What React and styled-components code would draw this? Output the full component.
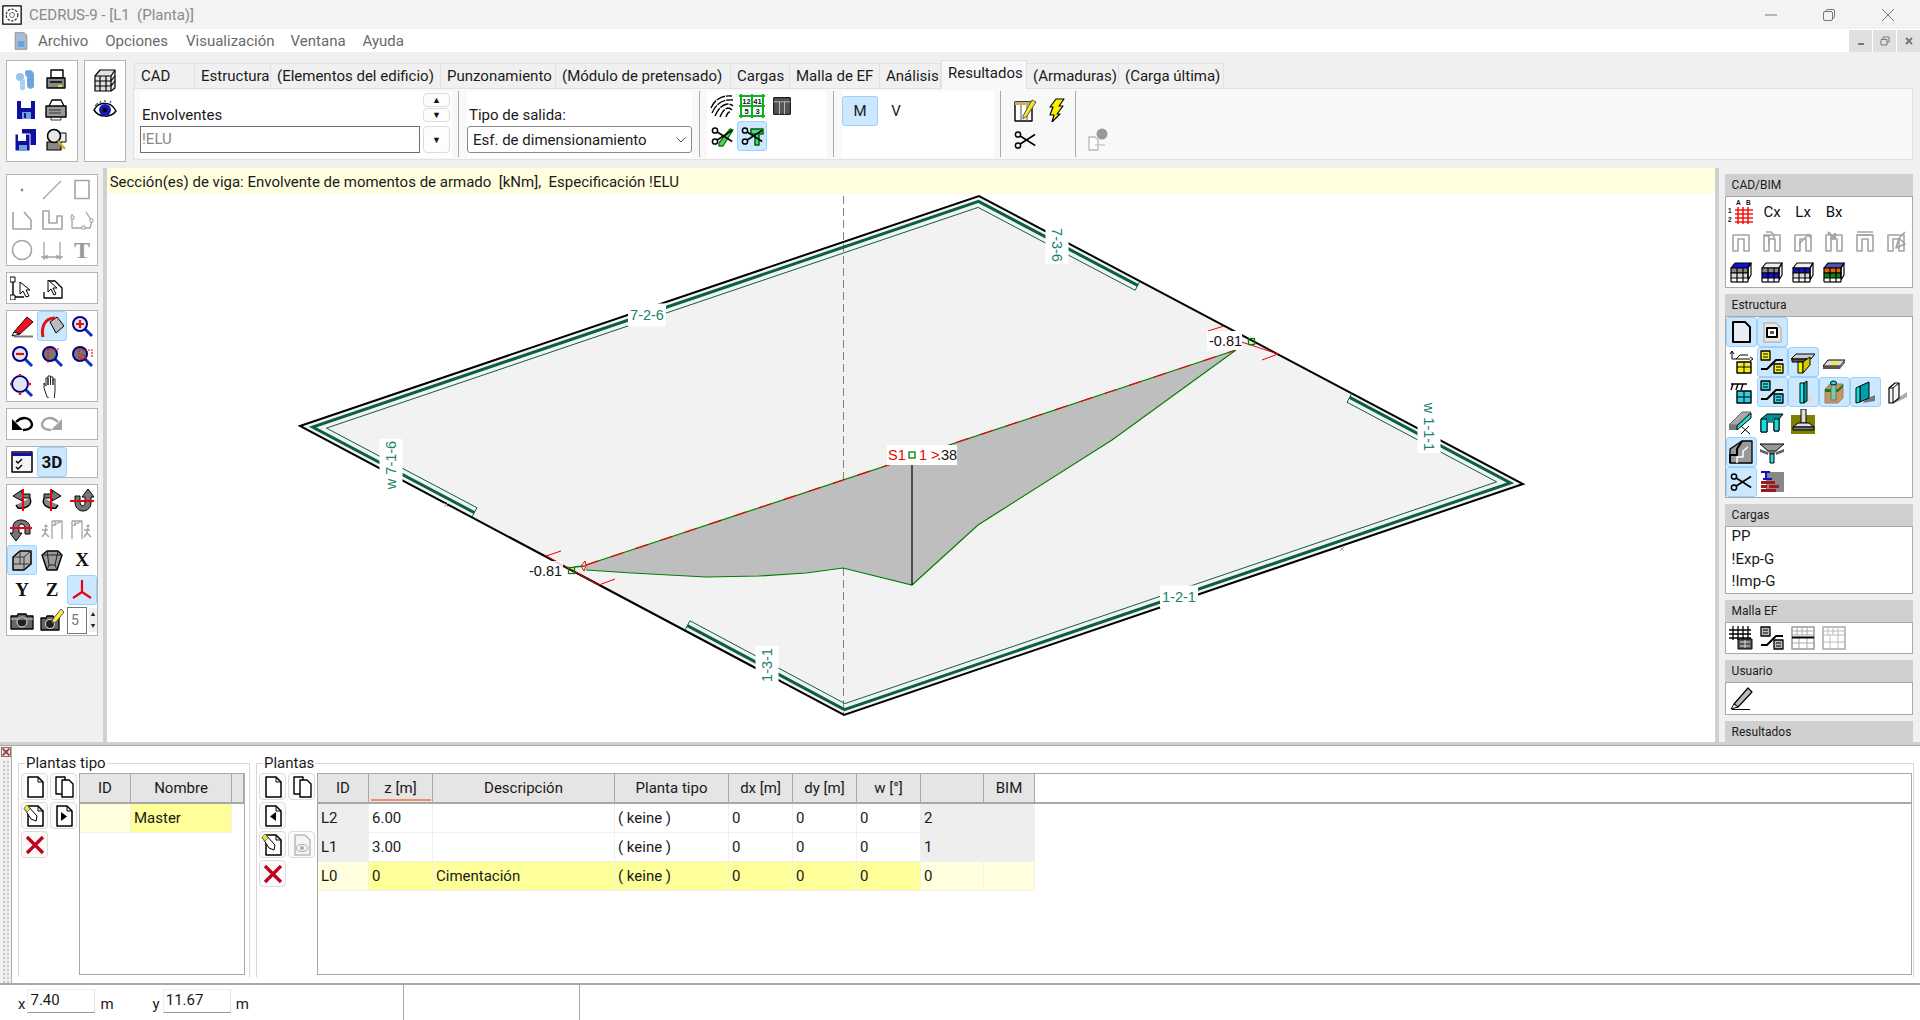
import styled, { createGlobalStyle } from 'styled-components'

const GlobalStyle = createGlobalStyle`
html, body { margin: 0; padding: 0; height: 100%; overflow: hidden; background: #f0f0f0; }
#root { height: 100%; }
* { box-sizing: border-box; }
`
const Page = styled.div`
width: 1920px;
height: 1020px;
display: flex;
flex-direction: column;
overflow: hidden;
font-family: Roboto, 'Liberation Sans', sans-serif;
font-size: 15px;
color: #1a1a1a;
background: #f0f0f0;
`
const TitleBar = styled.div`
height: 29px;
display: flex;
align-items: center;
background: #f3f3f3;
color: #8a8a8a;
padding-left: 2px;
gap: 7px;
`
const WinButtons = styled.div`
margin-left: auto;
display: flex;
padding-right: 3px;
`
const WinButton = styled.div`
width: 58.5px;
height: 29px;
display: flex;
align-items: center;
justify-content: center;
`
const MenuBar = styled.div`
height: 23px;
display: flex;
align-items: center;
background: #fff;
color: #6a6a6a;
padding: 0 0 0 11px;
`
const MenuItem = styled.span`
margin: 1px 0 0 ${(p) => p.$ml}px;
`
const MdiButtons = styled.div`
margin-left: auto;
display: flex;
gap: 1px;
`
const MdiButton = styled.div`
width: 23px;
height: 22px;
display: flex;
align-items: center;
justify-content: center;
background: #e0e0e0;
`
const ToolRow = styled.div`
height: 116px;
display: flex;
padding: 8px 7px 0 6px;
`
const SideBox = styled.div`
height: 102px;
width: ${(p) => p.$w}px;
margin-right: ${(p) => p.$mr}px;
border: 1px solid #b4b4b4;
background: #fff;
padding: 4px 0 0 ${(p) => p.$pl}px;
display: grid;
grid-template-columns: repeat(${(p) => p.$cols}, 30px);
grid-auto-rows: 30px;
`
const TabArea = styled.div`
flex: 1;
display: flex;
flex-direction: column;
padding-top: 3px;
`
const Tabs = styled.div`
display: flex;
height: 25px;
align-items: flex-end;
padding-left: 1px;
`
const Tab = styled.div`
width: ${(p) => p.$w}px;
height: ${(p) => (p.$active ? 29 : 25)}px;
padding: 3px 0 0 6px;
background: ${(p) => (p.$active ? '#f8f8f8' : '#f0f0f0')};
border: 1px solid #e2e2e2;
border-bottom: none;
border-left: ${(p) => (p.$first || p.$active ? '1px solid #e2e2e2' : 'none')};
white-space: nowrap;
margin-bottom: ${(p) => (p.$active ? -1 : 0)}px;
position: relative;
z-index: ${(p) => (p.$active ? 1 : 0)};
`
const RibbonPanel = styled.div`
height: 72px;
display: flex;
background: #f8f8f8;
border: 1px solid #e2e2e2;
padding: 2px 0 0 6px;
`
const Group = styled.div`
width: ${(p) => p.$w}px;
height: 67px;
background: ${(p) => (p.$plain ? 'transparent' : '#fff')};
padding-left: ${(p) => p.$pl || 0}px;
padding-top: ${(p) => p.$pt || 0}px;
`
const Sep = styled.div`
width: 1px;
height: 66px;
background: #a8a8a8;
margin: 0 ${(p) => p.$r}px 0 ${(p) => p.$l}px;
`
const EnvGrid = styled.div`
display: grid;
grid-template-columns: 280px 27px;
column-gap: 3px;
row-gap: 4px;
padding-top: 2px;
`
const EnvLabel = styled.div`
align-self: end;
padding: 0 0 0 2px;
margin-bottom: -2px;
`
const SpinStack = styled.div`
display: flex;
flex-direction: column;
gap: 1px;
`
const ArrowButton = styled.div`
height: ${(p) => p.$h}px;
border: 1px solid #dcdcdc;
border-radius: 4px;
background: #fdfdfd;
display: flex;
align-items: center;
justify-content: center;
font-size: 9px;
color: #111;
`
const TextField = styled.div`
height: 27px;
border: 1px solid #6e6e6e;
padding: 3px 1px;
color: #888;
line-height: 19px;
`
const SalidaLabel = styled.div`
height: 35px;
padding: 15px 0 0 2px;
line-height: 18px;
`
const SelectBox = styled.div`
height: 27px;
display: flex;
align-items: center;
justify-content: space-between;
border: 1px solid #8a8a8a;
border-radius: 3px;
padding: 0 5px;
`
const IconGrid = styled.div`
display: grid;
grid-template-columns: repeat(${(p) => p.$cols}, ${(p) => p.$cw || 30}px);
grid-auto-rows: ${(p) => p.$rh || 30}px;
`
const ToolButton = styled.div`
display: flex;
align-items: center;
justify-content: center;
border-radius: 3px;
border: 1px solid ${(p) => (p.$active ? '#99d1ff' : 'transparent')};
background: ${(p) => (p.$active ? '#cce8ff' : 'transparent')};
`
const TextTool = styled(ToolButton)`
font-family: ${(p) => (p.$serif ? "'Liberation Serif', serif" : "Roboto, sans-serif")};
font-weight: ${(p) => (p.$bold ? 700 : 400)};
font-size: ${(p) => p.$fs || 15}px;
color: ${(p) => p.$color || '#111'};
`
const LetterRow = styled.div`
display: flex;
padding-top: 5px;
`
const LetterButton = styled.div`
width: 36px;
height: 30px;
display: flex;
align-items: center;
justify-content: center;
border-radius: 3px;
border: 1px solid ${(p) => (p.$active ? '#99d1ff' : 'transparent')};
background: ${(p) => (p.$active ? '#cce8ff' : 'transparent')};
`
const Middle = styled.div`
height: 574px;
display: flex;
`
const LeftTools = styled.div`
width: 104px;
padding: 6px 0 0 6px;
display: flex;
flex-direction: column;
gap: 6px;
`
const ToolBox = styled.div`
width: 92px;
border: 1px solid #b4b4b4;
background: #fff;
display: grid;
grid-template-columns: repeat(3, 30px);
grid-auto-rows: 30px;
`
const SpinCell = styled.div`
display: flex;
align-items: center;
padding-left: 0;
`
const SpinValue = styled.div`
width: 20px;
height: 27px;
border: 1px solid #777;
color: #777;
font-size: 14px;
line-height: 25px;
padding-left: 3px;
`
const MiniSpin = styled.div`
margin-left: 2px;
width: 8px;
display: flex;
flex-direction: column;
align-items: center;
font-size: 7px;
line-height: 12px;
background: #f0f0f0;
`
const Splitter = styled.div`
width: 4px;
background: #d0d0d0;
`
const HSplitter = styled.div`
height: 3px;
flex: none;
background: #d0d0d0;
`
const CanvasColumn = styled.div`
width: 1608px;
display: flex;
flex-direction: column;
`
const InfoLine = styled.div`
height: 26px;
background: #ffffdf;
padding-left: 3px;
line-height: 28px;
`
const DrawArea = styled.div`
flex: 1;
background: #fff;
`
const RightPanel = styled.div`
width: 204px;
padding: 6px 0 0 6px;
overflow: hidden;
`
const PanelHead = styled.div`
height: 22px;
width: 188px;
background: #d0d0d0;
padding-left: 7px;
font-size: 12px;
line-height: 22px;
`
const PanelBody = styled.div`
width: 188px;
border: 1px solid #a8a8a8;
background: #fff;
margin-bottom: 6px;
height: ${(p) => p.$h}px;
`
const LoadRow = styled.div`
height: 22.5px;
line-height: 18px;
padding-left: 6px;
`
const Bottom = styled.div`
height: 240px;
display: flex;
border-top: 1px solid #a8a8a8;
border-bottom: 2px solid #a8a8a8;
background: #fff;
`
const Grip = styled.div`
width: 12px;
background: #f0f0f0;
border-right: 1px solid #b0b0b0;
padding: 1px 0 0 1px;
display: flex;
flex-direction: column;
align-items: center;
`
const GripDots = styled.div`
width: 8px;
flex: 1;
margin-top: 3px;
background-image: radial-gradient(#c8c8c8 1px, transparent 1.2px);
background-size: 4px 4px;
`
const BottomBody = styled.div`
flex: 1;
display: flex;
padding: 17px 6px 6px 6px;
gap: 6px;
`
const Fieldset = styled.div`
position: relative;
width: ${(p) => p.$w || 'auto'};
flex: ${(p) => (p.$grow ? 1 : 'none')};
border: 1px solid #d8d8d8;
border-bottom: none;
display: flex;
padding: 9px ${(p) => p.$pr}px 0 2px;
`
const Legend = styled.div`
position: absolute;
top: -11px;
left: 6px;
background: #fff;
padding: 0 1px;
line-height: 20px;
`
const ActionGrid = styled.div`
display: grid;
grid-template-columns: 27px 27px;
grid-auto-rows: 29px;
column-gap: 2px;
align-content: start;
margin-right: 2px;
`
const ActionButton = styled.div`
width: 27px;
height: 27px;
border: 1px solid #dcdcdc;
border-radius: 4px;
background: #fbfbfb;
display: flex;
align-items: center;
justify-content: center;
`
const Table = styled.div`
flex: 1;
height: 202px;
border: 1px solid #a8a8a8;
background: #fff;
`
const HeadRow = styled.div`
display: flex;
height: 30px;
border-bottom: 2px solid #a8a8a8;
`
const HeadCell = styled.div`
position: relative;
width: ${(p) => p.$w}px;
background: #e5e5e5;
border-right: 1px solid #a8a8a8;
display: flex;
align-items: center;
justify-content: center;
&::after {
  content: '';
  display: ${(p) => (p.$sorted ? 'block' : 'none')};
  position: absolute;
  left: 2px;
  right: 1px;
  bottom: 1px;
  height: 2px;
  background: #f09060;
}
`
const BodyRow = styled.div`
display: flex;
height: 29px;
`
const Cell = styled.div`
width: ${(p) => p.$w}px;
background: ${(p) => p.$bg || '#fff'};
border-right: 1px solid #f0f0f0;
border-bottom: 1px solid #f0f0f0;
padding-left: 3px;
line-height: 29px;
white-space: nowrap;
`
const StatusBar = styled.div`
flex: 1;
display: flex;
align-items: center;
background: #fff;
`
const StatusSection = styled.div`
height: 100%;
width: ${(p) => p.$w}px;
display: flex;
align-items: center;
border-right: 1px solid #a8a8a8;
padding-left: ${(p) => p.$pl || 0}px;
`
const StatusLabel = styled.span`
margin: 2px ${(p) => p.$r}px 0 ${(p) => p.$l}px;
`
const StatusField = styled.div`
width: 68px;
height: 24px;
border-bottom: 1px solid #999;
border-right: 1px solid #e0e0e0;
border-top: 1px solid #eee;
border-left: 1px solid #eee;
padding-left: 2px;
line-height: 21px;
margin-top: -3px;
`

const Glyph = ({ children, s = 24 }) => (
  <svg width={s} height={s} viewBox="0 0 24 24" fill="none" strokeLinejoin="round">
    {children}
  </svg>
)
const GREY = '#a4a4a4'
const Lens = ({ children, r = 7, fill = '#dfe6f5' }) => (
  <>
    <path d="M15 15l7 7" stroke="#1030c0" strokeWidth="3" />
    <circle cx="10" cy="10" r={r} fill={fill} stroke="#000080" strokeWidth="2" />
    {children}
  </>
)
const Scissors = ({ blade = '#000' }) => (
  <g stroke={blade} strokeWidth="1.5">
    <circle cx="5" cy="6.5" r="2.6" />
    <circle cx="5" cy="17.5" r="2.6" />
    <path d="M7.2 8l15 9.5M7.2 16L22 6.5" />
  </g>
)
const Stack = ({ a, b, c }) => (
  <g stroke="#000" strokeWidth="1.2">
    <path d="M2 8l4-5h16l-3 5z" fill={a} />
    <path d="M2 8h17v5H2z" fill={b} />
    <path d="M2 13h17v5H2z" fill={c} />
    <path d="M2 18v4M8 8v14M14 8v14M19 8v14M19 8l3-5v12l-3 5" />
    <path d="M2 22h17" />
  </g>
)
const Frame = ({ children }) => (
  <g stroke={GREY} strokeWidth="1.6">
    <path d="M4 21V5h16v16h-5V9H9v12z" />
    {children}
  </g>
)
const Sheet = ({ children }) => (
  <>
    <path d="M5 2h10l5 5v15H5z" fill="#fff" stroke="#000" strokeWidth="1.5" />
    <path d="M15 2v5h5" stroke="#000" />
    {children}
  </>
)
const RedX = () => (
  <Glyph>
    <path d="M4 4l16 16M20 4L4 20" stroke="#c00018" strokeWidth="3.2" />
  </Glyph>
)
const Sheets = () => (
  <Glyph>
    <path d="M4 2h9v17H4z" fill="#fff" stroke="#000" strokeWidth="1.4" />
    <path d="M10 5h7l4 4v13H10z" fill="#fff" stroke="#000" strokeWidth="1.4" />
  </Glyph>
)
const EditSheet = () => (
  <Glyph>
    <Sheet />
    <path d="M1 4l3-3 10 11-1 5-5-2z" fill="#fff" stroke="#000" />
    <path d="M1 4l3-3 3 4-3 3z" fill="#f4e820" stroke="#888" />
  </Glyph>
)

const ic = {
  point: <Glyph><circle cx="12" cy="12" r="1.4" fill="#888" /></Glyph>,
  line: <Glyph><path d="M3 21L21 3" stroke={GREY} strokeWidth="1.2" /></Glyph>,
  rect: <Glyph><path d="M5 2.5h14v18H5z" stroke={GREY} strokeWidth="1.6" /></Glyph>,
  poly: <Glyph><path d="M3 4v17h18V12l-7-8" stroke={GREY} strokeWidth="1.6" /></Glyph>,
  ushape: <Glyph><path d="M3 3v18h19V8h-5v7H9V3z" stroke={GREY} strokeWidth="1.6" /></Glyph>,
  nodes: (
    <Glyph>
      <path d="M2 6v14h18l2-7-6-9" stroke={GREY} strokeWidth="1.3" />
      <path d="M1 8h3v3H1zM12 18h3v3h-3zM20 11h3v3h-3z" fill="#fff" stroke={GREY} />
    </Glyph>
  ),
  circle: <Glyph><circle cx="12" cy="12" r="9.5" stroke={GREY} strokeWidth="1.6" /></Glyph>,
  dim: <Glyph><path d="M4 4v18M20 4v18M1 19h22M4 19l3-1.5v3zM20 19l-3-1.5v3z" stroke={GREY} strokeWidth="1.3" /></Glyph>,
  nodeArrow: (
    <Glyph>
      <path d="M3 6v15h11" stroke="#000" strokeWidth="1.4" />
      <path d="M0 1h5v5H0zM0 19h5v5H0z" fill="#fff" stroke="#000" />
      <path d="M10 6l0 12 3-3 3 6 3-1-3-6h4z" fill="#fff" stroke="#000" />
    </Glyph>
  ),
  boxArrow: (
    <Glyph>
      <path d="M8 5h7l7 7v10H4v-6" stroke="#000" strokeWidth="1.3" />
      <path d="M8 4v12l3-3 3 6 2-1-3-6h4z" fill="#fff" stroke="#000" />
    </Glyph>
  ),
  pencil: (
    <Glyph>
      <path d="M4 18L17 3l6 5-13 12z" fill="#f01020" stroke="#300" />
      <path d="M4 18l6 2-8 2z" fill="#fff" stroke="#000" />
      <path d="M4 22.5h19" stroke="#777" strokeWidth="2" />
    </Glyph>
  ),
  bucket: (
    <Glyph>
      <path d="M10 8l7-5 7 9-8 7z" fill="#bbb" stroke="#000" />
      <path d="M3 23C1 14 4 4 15 4" stroke="#e01010" strokeWidth="3" />
    </Glyph>
  ),
  zoomIn: <Glyph><Lens><path d="M10 6v8M6 10h8" stroke="#e01010" strokeWidth="2.2" /></Lens></Glyph>,
  zoomOut: <Glyph><Lens><path d="M6 10h8" stroke="#e01010" strokeWidth="2.2" /></Lens></Glyph>,
  zoomWin: <Glyph><Lens fill="#777"><path d="M5 5h14M8 5v14" stroke="#f01010" strokeDasharray="2 1" strokeWidth="1.2" /></Lens></Glyph>,
  zoomPrev: <Glyph><Lens fill="#777"><path d="M9 6h13v7M9 6v8M12 10l-2 6 6-2z" stroke="#f01010" strokeDasharray="2 1" strokeWidth="1.2" /></Lens></Glyph>,
  zoomFit: <Glyph><Lens r={8}><path d="M10 0v2M0 10h2M18 10h3M10 18v3" stroke="#f01010" strokeWidth="2.4" /></Lens></Glyph>,
  hand: (
    <Glyph>
      <path d="M7 23l-3-9V9l2 3V4h2v7-9h2.500v9-8H13v8-6h2v12l-1 10z" stroke="#222" fill="#fff" />
    </Glyph>
  ),
  undo: (
    <Glyph>
      <path d="M6 10c6-6 14-5 16 2 0 4-4 6-9 6" stroke="#000" strokeWidth="2.4" />
      <path d="M2 7v11h11z" fill="#000" />
    </Glyph>
  ),
  redo: (
    <Glyph>
      <path d="M18 10C12 4 4 5 2 12c0 4 4 6 9 6" stroke={GREY} strokeWidth="2.4" />
      <path d="M22 7v11H11z" fill={GREY} />
    </Glyph>
  ),
  checks: (
    <Glyph>
      <path d="M2 2h20v20H2z" fill="#f4f4f4" stroke="#000" strokeWidth="1.5" />
      <path d="M2 3h20v3H2z" fill="#1010b0" />
      <path d="M6 11l2 2 4-4M6 17l2 2 4-4" stroke="#000" strokeWidth="1.4" />
    </Glyph>
  ),
  rotL: (
    <Glyph>
      <path d="M12 2L3 8l9 5V10h8V6h-8z" fill="#777" stroke="#000" />
      <path d="M20 10c3 8-5 11-12 10l-2-3" fill="#888" stroke="#000" strokeWidth="1.4" />
      <path d="M13 1v22" stroke="#f00010" strokeWidth="2" />
    </Glyph>
  ),
  rotR: (
    <Glyph>
      <path d="M12 2l9 6-9 5V10H4V6h8z" fill="#777" stroke="#000" />
      <path d="M4 10c-3 8 5 11 12 10l2-3" fill="#888" stroke="#000" strokeWidth="1.4" />
      <path d="M11 1v22" stroke="#f00010" strokeWidth="2" />
    </Glyph>
  ),
  rotUp: (
    <Glyph>
      <path d="M18 1l6 8h-3v6c0 4-3 8-8 8s-8-4-8-9V8h5v6c0 3 2 4 3 4s2-2 2-4V9h-3z" fill="#777" stroke="#000" />
      <path d="M0 13h24" stroke="#f00010" strokeWidth="2" />
    </Glyph>
  ),
  rotDown: (
    <Glyph>
      <path d="M6 23l-6-8h3V9c0-4 3-7 8-7s9 3 9 8v6h-5V10c0-3-2-4-4-4s-2 2-2 4v5h3z" fill="#777" stroke="#000" />
      <path d="M0 10h22" stroke="#f00010" strokeWidth="2" />
    </Glyph>
  ),
  runR: (
    <Glyph>
      <path d="M12 3h10v18M12 3v18M12 8l10-5M15 3v5" stroke={GREY} strokeWidth="1.3" />
      <circle cx="6" cy="8" r="1.6" fill={GREY} />
      <path d="M6 10l-1 5-3 4M5 15l4 4M2 12l6 0" stroke={GREY} strokeWidth="1.5" />
    </Glyph>
  ),
  runL: (
    <Glyph>
      <path d="M2 3h10v18M2 3v18M2 8l10-5M5 3v5" stroke={GREY} strokeWidth="1.3" />
      <circle cx="18" cy="8" r="1.6" fill={GREY} />
      <path d="M18 10l-1 5-3 4M17 15l4 4M14 12l6 0" stroke={GREY} strokeWidth="1.5" />
    </Glyph>
  ),
  cube: (
    <Glyph>
      <path d="M3 9l7-6h11v13l-7 6H3z" fill="#b0b0b0" stroke="#000" strokeWidth="1.5" />
      <path d="M3 9h11v13M14 9l7-6M10 3v13H3M10 16h11" stroke="#333" />
    </Glyph>
  ),
  prism: (
    <Glyph>
      <path d="M2 7l5-4h11l4 4-5 15H7z" fill="#999" stroke="#000" strokeWidth="1.4" />
      <path d="M2 7h20M7 3l2 14-2 5M18 3l-3 14 2 5M9 17h6" stroke="#222" />
    </Glyph>
  ),
  axes: (
    <Glyph>
      <path d="M12 2v12M12 14l-9 6M12 14l9 6" stroke="#f00010" strokeWidth="2.2" />
    </Glyph>
  ),
  camera: (
    <Glyph>
      <path d="M1 8h6l1-2h8l1 2h6v13H1z" fill="#666" stroke="#000" strokeWidth="1.3" />
      <circle cx="12" cy="14" r="5" fill="#222" stroke="#ddd" />
      <path d="M1 11h22" stroke="#ccc" />
    </Glyph>
  ),
  cameraPen: (
    <Glyph>
      <path d="M1 10h5l1-2h6l1 2h5v12H1z" fill="#666" stroke="#000" strokeWidth="1.3" />
      <circle cx="10" cy="16" r="4.500" fill="#222" stroke="#ddd" />
      <path d="M13 11l8-10 3 3-8 10-4 1z" fill="#f8f040" stroke="#555" />
    </Glyph>
  ),
  menuDoc: (
    <Glyph s={20}>
      <path d="M5 2h11l3 3v17H5z" fill="#a8bcd0" stroke="#888" />
      <path d="M8 12h8v7H8z" fill="#5ea6e0" />
    </Glyph>
  ),
  wave: (
    <Glyph>
      <circle cx="6" cy="9" r="4" fill="#9cc4ec" />
      <path d="M11 3c6-3 10 1 9 6v10c-3 3-7 2-7-2V9c-2-1-2-3-2-6z" fill="#6ea4e0" />
      <path d="M6 13v8c2 2 5 1 5 0v-10z" fill="#a8d0f4" />
    </Glyph>
  ),
  printer: (
    <Glyph>
      <path d="M7 2h12v8H7z" fill="#fff" stroke="#000" strokeWidth="1.4" />
      <path d="M3 10h18v10H3z" fill="#888" stroke="#000" strokeWidth="1.4" />
      <path d="M6 14h12" stroke="#222" strokeWidth="2" />
      <path d="M14 17h4v2h-4z" fill="#e8e020" />
    </Glyph>
  ),
  save: (
    <Glyph>
      <path d="M3 3h18v18H3z" fill="#1010a0" />
      <path d="M7 3h10v7H7z" fill="#fff" />
      <path d="M8 14h9v7H8z" fill="#70a0e0" />
      <path d="M10 15h2v5h-2z" fill="#1010a0" />
    </Glyph>
  ),
  plotter: (
    <Glyph>
      <path d="M5 8l3-6h9l3 6" fill="#fff" stroke="#000" strokeWidth="1.3" />
      <path d="M2 8h20v11H2z" fill="#999" stroke="#000" strokeWidth="1.4" />
      <path d="M5 12h12M5 15h12M7 19h10v3H7z" stroke="#333" />
    </Glyph>
  ),
  saveAs: (
    <Glyph>
      <path d="M8 1h14v16H8z" fill="#1010a0" />
      <path d="M1 6h15v17H1z" fill="#1010a0" stroke="#fff" />
      <path d="M4 6h8v7H4z" fill="#fff" />
      <path d="M5 17h8v6H5z" fill="#70a0e0" />
    </Glyph>
  ),
  preview: (
    <Glyph>
      <path d="M3 14h14v8H3z" fill="#888" stroke="#000" strokeWidth="1.2" />
      <path d="M12 5h10v9H12z" fill="#eee" stroke="#000" />
      <circle cx="10" cy="8" r="6.500" fill="#e8e8e8" stroke="#000" strokeWidth="1.6" />
      <path d="M14 13l7 8" stroke="#d0b020" strokeWidth="2.4" />
    </Glyph>
  ),
  building: (
    <Glyph>
      <path d="M2 8l5-6h15v18l-4 3H2z" fill="#e0e0e0" stroke="#000" strokeWidth="1.2" />
      <path d="M2 8h16v15M18 8l4-6M2 13h16M2 18h16M7 8v15M13 8v15M18 13l4-5M18 18l4-5" stroke="#000" strokeWidth="1.2" />
    </Glyph>
  ),
  eye: (
    <Glyph>
      <path d="M1 12C6 3 18 3 23 13c-5 7-17 7-22-1z" fill="#fff" stroke="#000" strokeWidth="1.5" />
      <circle cx="12" cy="12" r="6" fill="#1818b0" />
      <circle cx="12" cy="12" r="2.200" fill="#000" />
      <path d="M2 8l3-3M7 5l1-2M12 4V2M17 5l1-2" stroke="#506090" strokeWidth="1.4" />
    </Glyph>
  ),
  finger: (
    <Glyph>
      <path d="M1 14C4 6 12 1 22 2M2 19C6 10 12 5 23 6M5 22c3-7 7-11 12-12 3 0 5 1 6 2M10 23c2-5 4-8 8-9 2 0 3 1 4 2M16 23c1-3 2-5 4-5" stroke="#000" strokeWidth="1.4" strokeDasharray="9 1" />
    </Glyph>
  ),
  greenGrid: (
    <svg width="26" height="26" viewBox="0 0 26 26">
      <path d="M2 1v24M13 1v24M24 1v24M0 3h26M0 13h26M0 23h26" stroke="#10b020" strokeWidth="2" />
      <g fontFamily="'Liberation Sans', sans-serif" fontSize="7.500" fontWeight="700" fill="#111" textAnchor="middle">
        <text x="7.500" y="11">12</text>
        <text x="18.500" y="11">41</text>
        <text x="7.500" y="21">5</text>
        <text x="18.500" y="21">3</text>
      </g>
    </svg>
  ),
  darkTable: (
    <Glyph s={20}>
      <path d="M2 2h20v20H2z" fill="#555" stroke="#000" strokeWidth="1.2" />
      <path d="M2 7h20M9 7v15M15 7v15" stroke="#ccc" />
    </Glyph>
  ),
  cutBeam: (
    <Glyph>
      <path d="M9 19l11-14 3 1-10 16-4 0z" fill="#60c860" stroke="#008000" strokeWidth="1.4" />
      <Scissors />
    </Glyph>
  ),
  cutT: (
    <Glyph>
      <path d="M11 5h12v5h-4v11h-4V10h-4z" fill="#50d890" stroke="#006000" strokeWidth="1.5" />
      <Scissors />
    </Glyph>
  ),
  tablePen: (
    <Glyph>
      <path d="M2 4h17v19H2z" fill="#fff" stroke="#000" strokeWidth="1.4" />
      <path d="M2 4h17v3H2z" fill="#c8b060" />
      <path d="M8 7v16M14 7v16" stroke="#555" />
      <path d="M10 18l9-16 4 2-9 14-4 3z" fill="#f4e820" stroke="#555" />
    </Glyph>
  ),
  bolt: (
    <Glyph>
      <path d="M13 1h8l-5 7h4l-6 8h3l-8 8 2-7H7l3-8H7z" fill="#f8f000" stroke="#000" strokeWidth="1.2" />
    </Glyph>
  ),
  scissors: <Glyph><Scissors /></Glyph>,
  export: (
    <Glyph>
      <circle cx="16" cy="6" r="5.500" fill="#999" />
      <path d="M3 9h6l3 3v10H3z" fill="#fff" stroke="#b8b8b8" strokeWidth="1.3" />
      <path d="M9 17h10" stroke="#b8b8b8" />
    </Glyph>
  ),
  redGrid: (
    <svg width="26" height="26" viewBox="0 0 26 26">
      <path d="M7 11h18M7 15h18M7 19h18M7 23h18M10 8v17M15 8v17M20 8v17" stroke="#f01818" strokeWidth="1.600" />
      <g fontFamily="'Liberation Sans', sans-serif" fontSize="6.500" fontWeight="700" fill="#111">
        <text x="8" y="6">A</text>
        <text x="18" y="6">B</text>
        <text x="0" y="14">1</text>
        <text x="0" y="23">2</text>
      </g>
    </svg>
  ),
  frame1: <Glyph><Frame /></Glyph>,
  frame2: <Glyph><Frame><path d="M3 6h6v9M6 2h5l3 3v5" /></Frame></Glyph>,
  frame3: <Glyph><Frame><path d="M8 14l10-10M16 4l4 4" /></Frame></Glyph>,
  frame4: <Glyph><Frame><path d="M6 2l7 7M8 8h5V3" strokeWidth="2.4" /></Frame></Glyph>,
  frame5: <Glyph><Frame><path d="M4 2h16M4 5h16" /></Frame></Glyph>,
  frame6: <Glyph><Frame><path d="M12 18l3-10 6 6zM15 8l6-6" /></Frame></Glyph>,
  stackTop: <Glyph><Stack a="#1010e0" b="#888" c="#d8d8d8" /></Glyph>,
  stackBot: <Glyph><Stack a="#eee" b="#888" c="#1010d0" /></Glyph>,
  stackMid: <Glyph><Stack a="#eee" b="#1010c0" c="#d8d8d8" /></Glyph>,
  stackAll: <Glyph><Stack a="#5050b0" b="#e06010" c="#108010" /></Glyph>,
  page: (
    <Glyph>
      <path d="M4 2h12l5 5v15H4z" fill="#e8ecf4" stroke="#000" strokeWidth="2" />
    </Glyph>
  ),
  pageHole: (
    <Glyph>
      <path d="M4 3h12l5 5v14H4z" fill="#e8e8e8" stroke="#bbb" strokeWidth="1.5" />
      <path d="M7 8h10v9H7z" fill="#fff" stroke="#000" strokeWidth="2" />
      <path d="M10 11h4v3h-4z" fill="#555" />
    </Glyph>
  ),
  axisTable: (
    <Glyph>
      <path d="M3 9V2M1 4l2-3 2 3M3 9h18M21 7l3 2-3 2M7 9l4-4h8" stroke="#000" />
      <path d="M8 12h14v11H8z" fill="#f4ec20" stroke="#000" strokeWidth="1.4" />
      <path d="M8 17h14M15 12v11" stroke="#000" />
    </Glyph>
  ),
  linkYellow: (
    <Glyph>
      <path d="M1 1h9v9H1zM14 14h9v9h-9z" fill="#f4ec20" stroke="#000" strokeWidth="1.3" />
      <path d="M3 4h5M3 7h5M16 17h5M16 20h5" stroke="#000" />
      <path d="M1 19h6l9-9h7" stroke="#000" strokeWidth="2" />
    </Glyph>
  ),
  tBeam: (
    <Glyph>
      <path d="M0 9l5-5h19l-4 5z" fill="#ccc" stroke="#000" />
      <path d="M1 9h17v3H1z" fill="#555" stroke="#000" />
      <path d="M7 12h5v11H7z" fill="#f4f000" stroke="#000" />
      <path d="M12 12l7-5v8l-7 8z" fill="#d8c800" stroke="#000" />
    </Glyph>
  ),
  slabY: (
    <Glyph>
      <path d="M1 16l5-6h17l-5 6z" fill="#ddd" stroke="#000" />
      <path d="M1 16h17v3H1z" fill="#555" />
      <path d="M18 16l5-6v3l-5 6z" fill="#777" />
      <path d="M8 15l4-4h5l-4 4z" fill="#f4ec20" />
    </Glyph>
  ),
  loadTable: (
    <Glyph>
      <path d="M2 4h16M4 4L2 10M9 4l-2 6M14 4l-2 6" stroke="#000" strokeWidth="1.4" />
      <path d="M8 11h14v12H8z" fill="#30d0e0" stroke="#000" strokeWidth="1.4" />
      <path d="M8 17h14M15 11v12" stroke="#000" />
    </Glyph>
  ),
  linkCyan: (
    <Glyph>
      <path d="M1 1h9v9H1zM14 14h9v9h-9z" fill="#30d0e0" stroke="#000" strokeWidth="1.3" />
      <path d="M3 4h5M3 7h5M16 17h5M16 20h5" stroke="#000" />
      <path d="M1 19h6l9-9h7" stroke="#000" strokeWidth="2" />
    </Glyph>
  ),
  column: (
    <Glyph>
      <path d="M15 17l7 0v5l-7 1z" fill="#ddd" />
      <path d="M9 3h4v20H9z" fill="#20f0f0" stroke="#000" />
      <path d="M13 3l3-2v20l-3 2z" fill="#00a0a8" stroke="#000" />
    </Glyph>
  ),
  pile: (
    <Glyph>
      <path d="M3 9l5-5h13v14l-5 5H3z" fill="#d09060" stroke="#888" />
      <path d="M3 9h13v3H3zM16 9l5-5v3l-5 5z" fill="#108010" />
      <path d="M9 3h5v17H9z" fill="#80c8a8" stroke="#508070" />
      <ellipse cx="11.500" cy="3" rx="3" ry="2" fill="#20e0e0" stroke="#000" />
    </Glyph>
  ),
  wallCyan: (
    <Glyph>
      <path d="M13 19l9-4v6l-12 2z" fill="#777" />
      <path d="M7 6l9-4v16l-9 4z" fill="#00a0a8" stroke="#000" />
      <path d="M3 8l4-2v16l-4 1z" fill="#20d8e0" stroke="#000" />
    </Glyph>
  ),
  wallWhite: (
    <Glyph>
      <path d="M14 18l9-6v5l-12 6z" fill="#aaa" />
      <path d="M5 8l6-5h4v15l-6 5H5z" fill="#f4f4f4" stroke="#000" strokeWidth="1.2" />
      <path d="M5 8h4v15M9 8l6-5" stroke="#000" />
    </Glyph>
  ),
  slabCut: (
    <Glyph>
      <path d="M0 15l13-13h9L8 15z" fill="#aaa" stroke="#666" />
      <path d="M0 15h9v5H0z" fill="#777" />
      <path d="M8 16L22 3v5L8 20z" fill="#20e0e8" stroke="#000" />
      <path d="M12 16l9 8M20 16l-8 8" stroke="#000" />
    </Glyph>
  ),
  ushapeCyan: (
    <Glyph>
      <path d="M1 9l6-5h16l-4 5v12h-5V12H7v10H1z" fill="#008c90" stroke="#000" />
      <path d="M1 9h6v13H1zM14 9h5v12h-5z" fill="#18d8e0" stroke="#000" />
      <path d="M7 5h7v7H7z" fill="#008c90" />
    </Glyph>
  ),
  footing: (
    <svg width="26" height="26" viewBox="0 0 26 26">
      <path d="M1 6h24v19H1z" fill="#808000" />
      <path d="M11 0h5v14h-5z" fill="#ddd" stroke="#000" />
      <path d="M3 18l5-4h11l5 4z" fill="#ddd" stroke="#000" />
      <path d="M3 18h21v3H3z" fill="#777" stroke="#000" />
    </svg>
  ),
  stair: (
    <Glyph>
      <path d="M1 9l12-8h10v22H1z" fill="#999" stroke="#000" strokeWidth="1.300" />
      <path d="M1 23v-8h7v-6l5-8" stroke="#000" strokeWidth="2" fill="none" />
      <path d="M8 23v-6h6v-6l5-4" stroke="#fff" strokeWidth="1.500" fill="none" />
    </Glyph>
  ),
  funnel: (
    <Glyph>
      <path d="M0 4h24l-8 7h-8z" fill="#999" stroke="#000" />
      <path d="M8 11h8l-1 3H9z" fill="#666" />
      <path d="M10 14h4v9h-4z" fill="#20e0e8" stroke="#000" />
      <path d="M0 9l8 3v3L0 12zM24 9l-8 3v3l8-3z" fill="#666" />
    </Glyph>
  ),
  masonry: (
    <Glyph>
      <path d="M6 2h18v20H6z" fill="#888" />
      <path d="M1 2h9M3 9h9M6 2v7" stroke="#1010c0" strokeWidth="2" />
      <path d="M1 11h14v3H1zM1 15h6v3H1zM9 15h10v3H9zM1 19h15v3H1z" fill="#a01818" />
    </Glyph>
  ),
  hashTable: (
    <Glyph>
      <path d="M0 4h22M0 8h22M0 12h22M4 0v14M9 0v14M14 0v14M19 0v14" stroke="#000" strokeWidth="1.300" />
      <path d="M9 13h14v10H9z" fill="#555" stroke="#000" />
      <path d="M11 16h10M11 20h10M16 14v8" stroke="#ddd" />
    </Glyph>
  ),
  linkGrey: (
    <Glyph>
      <path d="M1 1h9v9H1zM14 14h9v9h-9z" fill="#bbb" stroke="#000" strokeWidth="1.300" />
      <path d="M3 4h5M3 7h5M16 17h5M16 20h5" stroke="#000" />
      <path d="M1 19h6l9-9h7" stroke="#000" strokeWidth="2" />
    </Glyph>
  ),
  gridBar: (
    <Glyph>
      <path d="M1 1h22v22H1z" fill="#fff" stroke="#999" strokeWidth="1.500" />
      <path d="M1 5h22M1 9h22M6 1v8M11 1v8M16 1v8M1 17h22M8 11v12M16 11v12" stroke="#aaa" />
      <path d="M1 11.500h22" stroke="#000" strokeWidth="2" />
    </Glyph>
  ),
  gridPlain: (
    <Glyph>
      <path d="M1 1h22v22H1z" fill="#fff" stroke="#aaa" strokeWidth="1.500" />
      <path d="M1 5h22M1 9h22M6 1v8M11 1v8M16 1v8M1 16h22M8 9v14M16 9v14" stroke="#bbb" />
    </Glyph>
  ),
  userPen: (
    <Glyph>
      <path d="M5 18L19 2l4 4L9 21z" fill="#bbb" stroke="#000" strokeWidth="1.200" />
      <path d="M5 18l4 3-7 2z" fill="#fff" stroke="#000" />
      <path d="M3 23.500h18" stroke="#000" />
    </Glyph>
  ),
  closeSmall: (
    <Glyph s={10}>
      <path d="M1 1h22v22H1z" fill="#e8e8e8" stroke="#555" strokeWidth="2" />
      <path d="M4 4l16 16M20 4L4 20" stroke="#a03030" strokeWidth="4" />
    </Glyph>
  ),
}

const drawTools = ['point', 'line', 'rect', 'poly', 'ushape', 'nodes', 'circle', 'dim']
const viewTools = ['pencil', 'bucket', 'zoomIn', 'zoomOut', 'zoomWin', 'zoomPrev', 'zoomFit', 'hand']
const rotTools = ['rotL', 'rotR', 'rotUp', 'rotDown', 'runR', 'runL']
const cadRows = ['frame1', 'frame2', 'frame3', 'frame4', 'frame5', 'frame6', 'stackTop', 'stackBot', 'stackMid', 'stackAll']
const estructura = [
  ['page', 1], ['pageHole', 1], null, null, null, null,
  ['axisTable', 0], ['linkYellow', 1], ['tBeam', 1], ['slabY', 0], null, null,
  ['loadTable', 0], ['linkCyan', 1], ['column', 1], ['pile', 1], ['wallCyan', 1], ['wallWhite', 0],
  ['slabCut', 0], ['ushapeCyan', 0], ['footing', 0], null, null, null,
  ['stair', 1], ['funnel', 0], null, null, null, null,
  ['scissors', 1], ['masonry', 0], null, null, null, null,
]
const tabs = [
  ['CAD', 61], ['Estructura', 76], ['(Elementos del edificio)', 170], ['Punzonamiento', 115],
  ['(Módulo de pretensado)', 175], ['Cargas', 59], ['Malla de EF', 90], ['Análisis', 61],
  ['Resultados', 86, true], ['(Armaduras)', 92], ['(Carga última)', 105],
]
const plantaCols = [51, 64, 182, 114, 64, 64, 64, 63, 51]
const plantaHead = ['ID', 'z [m]', 'Descripción', 'Planta tipo', 'dx [m]', 'dy [m]', 'w [°]', '', 'BIM']
const SOFT = '#ffffdd'
const plantaRows = [
  { id: 'L2', z: '6.00', d: '', n: '2' },
  { id: 'L1', z: '3.00', d: '', n: '1' },
  { id: 'L0', z: '0', d: 'Cimentación', n: '0', sel: true },
]

// la planta es un paralelogramo, en coordenadas de pagina
const A = [301, 426]
const B = [980, 196]
const C = [1524, 484]
const D = [845, 715]
const OUTLINE = [A, B, C, D]
const MOMENT_LOW = '1237,350 1113,440 979,525 913,585 844,568 807,573 760,576 707,577 633,573 587,570'

const offsetRun = (pts, d) => {
  const normal = (p, q) => {
    const dx = q[0] - p[0]
    const dy = q[1] - p[1]
    const l = Math.hypot(dx, dy)
    return [-dy / l, dx / l]
  }
  return pts.map((p, i) => {
    const n1 = i > 0 ? normal(pts[i - 1], p) : normal(p, pts[i + 1])
    const n2 = i < pts.length - 1 ? normal(p, pts[i + 1]) : n1
    const mx = n1[0] + n2[0]
    const my = n1[1] + n2[1]
    const k = (2 * d) / (mx * mx + my * my)
    return [p[0] + mx * k, p[1] + my * k]
  })
}
const toPts = (pts) => pts.map((p) => p.join(',')).join(' ')

const BeamRun = ({ pts }) => {
  const thick = offsetRun(pts, 5)
  const thin = offsetRun(pts, 10.5)
  const last = pts.length - 1
  return (
    <g fill="none" stroke="#0a6040">
      <polyline points={toPts(thick)} strokeWidth="3" />
      <polyline points={toPts(thin)} strokeWidth="1" />
      <line x1={pts[0][0]} y1={pts[0][1]} x2={thin[0][0]} y2={thin[0][1]} />
      <line x1={pts[last][0]} y1={pts[last][1]} x2={thin[last][0]} y2={thin[last][1]} />
    </g>
  )
}

const WallLabel = ({ x, y, w, r = 0, children }) => (
  <g transform={`translate(${x} ${y}) rotate(${r})`}>
    <rect x={-w / 2} y="-11.500" width={w} height="23" fill="#fff" />
    <text textAnchor="middle" y="5" fill="#1a8070" fontSize="14.500" fontFamily="'Liberation Sans', sans-serif">
      {children}
    </text>
  </g>
)

const Drawing = () => (
  <svg width="1608" height="548" viewBox="108 194 1608 548">
    <polygon points={toPts(OUTLINE)} fill="#f2f2f2" />
    <line x1="844.500" y1="196" x2="844.500" y2="716" stroke="#808080" strokeWidth="1" strokeDasharray="8 4" />
    <polygon points={toPts(OUTLINE)} fill="none" stroke="#000" strokeWidth="2" />
    <BeamRun pts={[[473, 517], A, B, [1141, 281]]} />
    <BeamRun pts={[[1353, 393], C, D, [686, 630]]} />
    <polygon points={`587,565 ${MOMENT_LOW}`} fill="#bebebe" />
    <line x1="587" y1="565" x2="1237" y2="350" stroke="#008000" strokeWidth="1.200" />
    <line x1="587" y1="565" x2="1237" y2="350" stroke="#f00000" strokeWidth="1.200" strokeDasharray="13 13" />
    <polyline points={MOMENT_LOW} fill="none" stroke="#008000" strokeWidth="1.200" />
    <line x1="913" y1="455" x2="913" y2="585" stroke="#000" strokeWidth="1.200" />
    <g fill="none" stroke="#f00000">
      <polyline points="562,551 547,556 600,585 616,579" />
      <polyline points="1225,326 1209,331 1279,354 1263,360" />
      <path d="M586 561l-4 5 3 5 2-5z" />
    </g>
    <g fill="none" stroke="#008000" strokeWidth="1.300">
      <rect x="569.500" y="567.500" width="6" height="6" />
      <path d="M575 567l11-1" />
      <rect x="1249.500" y="338.500" width="6" height="6" />
    </g>
    <path d="M445 503l4 4M449 503l-4 4M1341 547l4 4M1345 547l-4 4" stroke="#aaa" />
    <g fontFamily="'Liberation Sans', sans-serif" fontSize="14.500">
      <rect x="529" y="561" width="35" height="20" fill="#fff" opacity="0.850" />
      <text x="530" y="576" fill="#111">-0.81</text>
      <rect x="1208" y="331" width="35" height="19" fill="#fff" />
      <text x="1210" y="346" fill="#111">-0.81</text>
      <rect x="888" y="445" width="70" height="20" fill="#fff" />
      <text x="889" y="460" fill="#f00000">S1</text>
      <rect x="910" y="452" width="6" height="6" fill="none" stroke="#008000" strokeWidth="1.300" />
      <text x="920" y="460" fill="#f00000">1 &gt;</text>
      <text x="938" y="460" fill="#111">.38</text>
    </g>
    <WallLabel x={648} y={315} w={38}>7-2-6</WallLabel>
    <WallLabel x={1058} y={245} w={38} r={90}>7-3-6</WallLabel>
    <WallLabel x={1430} y={427} w={52} r={90}>w 1-1-1</WallLabel>
    <WallLabel x={392} y={465} w={52} r={-90}>w 7-1-6</WallLabel>
    <WallLabel x={768} y={665} w={38} r={-90}>1-3-1</WallLabel>
    <WallLabel x={1180} y={597} w={38}>1-2-1</WallLabel>
  </svg>
)

const Tools = ({ names }) => names.map((n) => <ToolButton key={n}>{ic[n]}</ToolButton>)

function App() {
  return (
    <Page>
      <GlobalStyle />
      <TitleBar>
        <Glyph s={20}>
          <path d="M1 1h22v22H1z" fill="#fff" stroke="#000" strokeWidth="1.500" />
          <circle cx="12" cy="12" r="7" stroke="#333" strokeDasharray="3 1.500" strokeWidth="1.500" />
          <circle cx="12" cy="12" r="3" stroke="#555" />
        </Glyph>
        <span>CEDRUS-9 - [L1&nbsp;&nbsp;(Planta)]</span>
        <WinButtons>
          <WinButton>
            <svg width="12" height="12" viewBox="0 0 12 12"><path d="M0 6h12" stroke="#777" /></svg>
          </WinButton>
          <WinButton>
            <svg width="12" height="12" viewBox="0 0 12 12" fill="none" stroke="#777">
              <rect x="0.500" y="2.500" width="9" height="9" rx="1.500" />
              <path d="M3 2.500V2a1.500 1.500 0 0 1 1.500-1.500h5.500a1.500 1.500 0 0 1 1.500 1.500v5.500A1.500 1.500 0 0 1 10 9h-.5" />
            </svg>
          </WinButton>
          <WinButton>
            <svg width="12" height="12" viewBox="0 0 12 12"><path d="M0 0l12 12M12 0L0 12" stroke="#777" /></svg>
          </WinButton>
        </WinButtons>
      </TitleBar>
      <MenuBar>
        {ic.menuDoc}
        <MenuItem $ml={7}>Archivo</MenuItem>
        <MenuItem $ml={17}>Opciones</MenuItem>
        <MenuItem $ml={18}>Visualización</MenuItem>
        <MenuItem $ml={16}>Ventana</MenuItem>
        <MenuItem $ml={17}>Ayuda</MenuItem>
        <MdiButtons>
          <MdiButton>
            <svg width="10" height="10" viewBox="0 0 10 10"><path d="M2 8h6" stroke="#778" strokeWidth="2" /></svg>
          </MdiButton>
          <MdiButton>
            <svg width="10" height="10" viewBox="0 0 10 10" fill="none" stroke="#778"><path d="M1 3.500h6v5.500H1zM3 3V1h6v5H7" /></svg>
          </MdiButton>
          <MdiButton>
            <svg width="10" height="10" viewBox="0 0 10 10"><path d="M2 2l6 6M8 2L2 8" stroke="#778" strokeWidth="2" /></svg>
          </MdiButton>
        </MdiButtons>
      </MenuBar>
      <ToolRow>
        <SideBox $w={72} $mr={6} $pl={4} $cols={2}>
          <Tools names={['wave', 'printer', 'save', 'plotter', 'saveAs', 'preview']} />
        </SideBox>
        <SideBox $w={42} $mr={7} $pl={5} $cols={1}>
          <Tools names={['building', 'eye']} />
        </SideBox>
        <TabArea>
          <Tabs>
            {tabs.map(([label, w, active], i) => (
              <Tab key={label} $w={w} $active={active} $first={i === 0}>{label}</Tab>
            ))}
          </Tabs>
          <RibbonPanel>
            <Group $w={312}>
              <EnvGrid>
                <EnvLabel>Envolventes</EnvLabel>
                <SpinStack>
                  <ArrowButton $h={14}>▲</ArrowButton>
                  <ArrowButton $h={14}>▼</ArrowButton>
                </SpinStack>
                <TextField>!ELU</TextField>
                <ArrowButton $h={27}>▼</ArrowButton>
              </EnvGrid>
            </Group>
            <Sep $l={6} $r={8} />
            <Group $w={225}>
              <SalidaLabel>Tipo de salida:</SalidaLabel>
              <SelectBox>
                Esf. de dimensionamiento
                <svg width="10" height="6" viewBox="0 0 10 6"><path d="M0.500 0.500L5 5l4.500-4.500" stroke="#555" fill="none" /></svg>
              </SelectBox>
            </Group>
            <Sep $l={7} $r={7} />
            <Group $w={120}>
              <IconGrid $cols={3}>
                <ToolButton>{ic.finger}</ToolButton>
                <ToolButton>{ic.greenGrid}</ToolButton>
                <ToolButton>{ic.darkTable}</ToolButton>
                <ToolButton>{ic.cutBeam}</ToolButton>
                <ToolButton $active>{ic.cutT}</ToolButton>
              </IconGrid>
            </Group>
            <Sep $l={6} $r={8} />
            <Group $w={152}>
              <LetterRow>
                <LetterButton $active>M</LetterButton>
                <LetterButton>V</LetterButton>
              </LetterRow>
            </Group>
            <Sep $l={6} $r={0} />
            <Group $w={74} $plain $pl={9} $pt={4}>
              <IconGrid $cols={2}>
                <ToolButton>{ic.tablePen}</ToolButton>
                <ToolButton>{ic.bolt}</ToolButton>
                <ToolButton>{ic.scissors}</ToolButton>
              </IconGrid>
            </Group>
            <Sep $l={0} $r={0} />
            <Group $w={60} $plain $pl={7} $pt={34}>
              <IconGrid $cols={1}>
                <ToolButton>{ic.export}</ToolButton>
              </IconGrid>
            </Group>
          </RibbonPanel>
        </TabArea>
      </ToolRow>
      <Middle>
        <LeftTools>
          <ToolBox>
            <Tools names={drawTools} />
            <TextTool $serif $bold $fs={24} $color="#999">T</TextTool>
          </ToolBox>
          <ToolBox>
            <Tools names={['nodeArrow', 'boxArrow']} />
          </ToolBox>
          <ToolBox>
            {viewTools.map((n) => (
              <ToolButton key={n} $active={n === 'bucket'}>{ic[n]}</ToolButton>
            ))}
          </ToolBox>
          <ToolBox>
            <Tools names={['undo', 'redo']} />
          </ToolBox>
          <ToolBox>
            <ToolButton>{ic.checks}</ToolButton>
            <TextTool $active $bold $fs={17}>3D</TextTool>
          </ToolBox>
          <ToolBox>
            <Tools names={rotTools} />
            <ToolButton $active>{ic.cube}</ToolButton>
            <ToolButton>{ic.prism}</ToolButton>
            <TextTool $serif $bold $fs={19}>X</TextTool>
            <TextTool $serif $bold $fs={19}>Y</TextTool>
            <TextTool $serif $bold $fs={19}>Z</TextTool>
            <ToolButton $active>{ic.axes}</ToolButton>
            <ToolButton>{ic.camera}</ToolButton>
            <ToolButton>{ic.cameraPen}</ToolButton>
            <SpinCell>
              <SpinValue>5</SpinValue>
              <MiniSpin><span>▲</span><span>▼</span></MiniSpin>
            </SpinCell>
          </ToolBox>
        </LeftTools>
        <Splitter />
        <CanvasColumn>
          <InfoLine>Sección(es) de viga: Envolvente de momentos de armado&nbsp;&nbsp;[kNm],&nbsp;&nbsp;Especificación !ELU</InfoLine>
          <DrawArea>
            <Drawing />
          </DrawArea>
        </CanvasColumn>
        <Splitter />
        <RightPanel>
          <PanelHead>CAD/BIM</PanelHead>
          <PanelBody $h={92}>
            <IconGrid $cols={6} $cw={31}>
              <ToolButton>{ic.redGrid}</ToolButton>
              <TextTool>Cx</TextTool>
              <TextTool>Lx</TextTool>
              <TextTool>Bx</TextTool>
              <span />
              <span />
              <Tools names={cadRows} />
            </IconGrid>
          </PanelBody>
          <PanelHead>Estructura</PanelHead>
          <PanelBody $h={182}>
            <IconGrid $cols={6} $cw={31}>
              {estructura.map((it, i) =>
                it ? <ToolButton key={i} $active={!!it[1]}>{ic[it[0]]}</ToolButton> : <span key={i} />
              )}
            </IconGrid>
          </PanelBody>
          <PanelHead>Cargas</PanelHead>
          <PanelBody $h={68}>
            <LoadRow>PP</LoadRow>
            <LoadRow>!Exp-G</LoadRow>
            <LoadRow>!Imp-G</LoadRow>
          </PanelBody>
          <PanelHead>Malla EF</PanelHead>
          <PanelBody $h={32}>
            <IconGrid $cols={6} $cw={31}>
              <Tools names={['hashTable', 'linkGrey', 'gridBar', 'gridPlain']} />
            </IconGrid>
          </PanelBody>
          <PanelHead>Usuario</PanelHead>
          <PanelBody $h={33}>
            <IconGrid $cols={6} $cw={31}>
              <Tools names={['userPen']} />
            </IconGrid>
          </PanelBody>
          <PanelHead>Resultados</PanelHead>
        </RightPanel>
      </Middle>
      <HSplitter />
      <Bottom>
        <Grip>
          {ic.closeSmall}
          <GripDots />
        </Grip>
        <BottomBody>
          <Fieldset $w="232px" $pr={4}>
            <Legend>Plantas tipo</Legend>
            <ActionGrid>
              <ActionButton><Glyph><Sheet /></Glyph></ActionButton>
              <ActionButton><Sheets /></ActionButton>
              <ActionButton><EditSheet /></ActionButton>
              <ActionButton><Glyph><Sheet><path d="M9 8v9l6-4.500z" fill="#000" /></Sheet></Glyph></ActionButton>
              <ActionButton><RedX /></ActionButton>
            </ActionGrid>
            <Table>
              <HeadRow>
                <HeadCell $w={51}>ID</HeadCell>
                <HeadCell $w={101}>Nombre</HeadCell>
                <HeadCell $w={12} />
              </HeadRow>
              <BodyRow>
                <Cell $w={51} $bg={SOFT} />
                <Cell $w={101} $bg="#ffff99">Master</Cell>
              </BodyRow>
            </Table>
          </Fieldset>
          <Fieldset $grow $pr={1}>
            <Legend>Plantas</Legend>
            <ActionGrid>
              <ActionButton><Glyph><Sheet /></Glyph></ActionButton>
              <ActionButton><Sheets /></ActionButton>
              <ActionButton><Glyph><Sheet><path d="M15 8v9l-6-4.500z" fill="#000" /></Sheet></Glyph></ActionButton>
              <span />
              <ActionButton><EditSheet /></ActionButton>
              <ActionButton>
                <Glyph>
                  <path d="M5 2h10l5 5v15H5z" fill="#f4f4f4" stroke="#bbb" strokeWidth="1.500" />
                  <ellipse cx="12" cy="15" rx="6" ry="3.500" stroke="#aaa" />
                  <circle cx="12" cy="15" r="2" fill="#aaa" />
                </Glyph>
              </ActionButton>
              <ActionButton><RedX /></ActionButton>
            </ActionGrid>
            <Table>
              <HeadRow>
                {plantaHead.map((h, i) => (
                  <HeadCell key={i} $w={plantaCols[i]} $sorted={i === 1}>{h}</HeadCell>
                ))}
              </HeadRow>
              {plantaRows.map((r) => {
                const bg = r.sel ? '#ffff99' : '#fff'
                const edge = r.sel ? SOFT : '#eeeeee'
                const cells = [
                  [r.id, edge], [r.z, bg], [r.d, bg], ['( keine )', bg], ['0', bg], ['0', bg], ['0', bg],
                  [r.n, edge], ['', edge],
                ]
                return (
                  <BodyRow key={r.id}>
                    {cells.map(([t, c], i) => (
                      <Cell key={i} $w={plantaCols[i]} $bg={c}>{t}</Cell>
                    ))}
                  </BodyRow>
                )
              })}
            </Table>
          </Fieldset>
        </BottomBody>
      </Bottom>
      <StatusBar>
        <StatusSection $w={404}>
          <StatusLabel $l={18} $r={2}>x</StatusLabel>
          <StatusField>7.40</StatusField>
          <StatusLabel $l={5} $r={0}>m</StatusLabel>
          <StatusLabel $l={39} $r={3}>y</StatusLabel>
          <StatusField>11.67</StatusField>
          <StatusLabel $l={5} $r={0}>m</StatusLabel>
        </StatusSection>
        <StatusSection $w={176} />
      </StatusBar>
    </Page>
  )
}

export default App
